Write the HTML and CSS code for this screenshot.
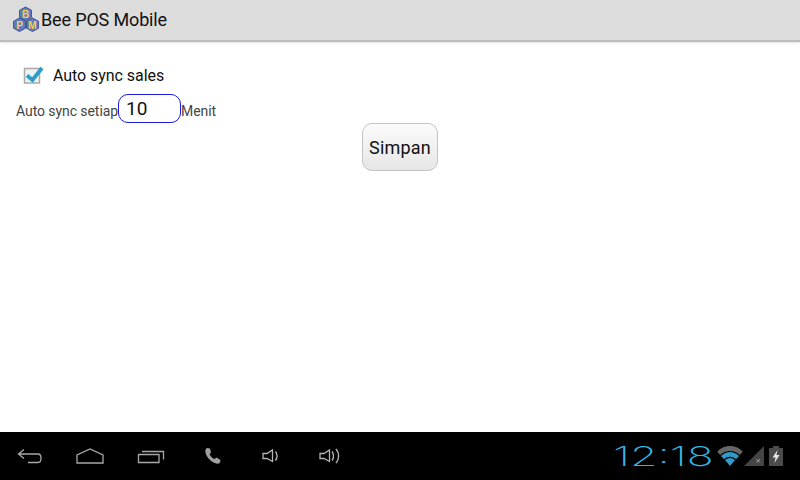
FILE: index.html
```html
<!DOCTYPE html>
<html lang="id">
<head>
<meta charset="utf-8">
<title>Bee POS Mobile</title>
<link rel="stylesheet" href="styles.css">
</head>
<body>
<div class="screen">
  <header class="action-bar">
    <svg class="logo" width="26" height="26" viewBox="0 0 26 26">
      <path d="M6 11.500 13 15 20 11.500V20H6Z" fill="#8c7a3a"/>
      <g fill="#5f7cc4" stroke="#3f5594" stroke-width="1">
        <path d="M12.500 1 18.500 4.300V11.200L12.500 14.500 6.500 11.200V4.300Z"/>
        <path d="M6.500 12 12.500 15.300V22.200L6.500 25.500 0.500 22.200V15.300Z"/>
        <path d="M19.500 12 25.500 15.300V22.200L19.500 25.500 13.500 22.200V15.300Z"/>
      </g>
      <text class="logo-letter" x="12.500" y="11.500">B</text>
      <text class="logo-letter" x="6.500" y="22.500">P</text>
      <text class="logo-letter" x="19.500" y="22.500">M</text>
    </svg>
    <span class="app-title">Bee POS Mobile</span>
  </header>

  <main class="content">
    <label class="check-row">
      <svg class="checkbox" width="22" height="20" viewBox="0 0 22 20">
        <rect x="2.500" y="3.500" width="15" height="14.500" fill="#f1f1f1" stroke="#a9a9a9" stroke-width="1.500"/>
        <path d="M5 10.500 10.500 15 20 3" fill="none" stroke="#2b9ccb" stroke-width="3.800"/>
      </svg>
      <span class="check-label">Auto sync sales</span>
    </label>
    <div class="interval-row">
      <span class="hint">Auto sync setiap</span>
      <span class="number-field">10</span>
      <span class="hint">Menit</span>
    </div>
    <div class="button-row">
      <button class="save-button" type="button">Simpan</button>
    </div>
  </main>

  <nav class="system-bar">
    <div class="nav-icons">
      <svg class="ico ico-back" width="26" height="16" viewBox="0 0 26 16">
        <path d="M7 1.500 1.500 6 7 10.500M2 6H21C25 6 25 14.500 21 14.500H11" fill="none" stroke="#a8a8a8" stroke-width="1.300"/>
      </svg>
      <svg class="ico ico-home" width="28" height="16" viewBox="0 0 28 16">
        <path d="M1 15V7L14 1 27 7V15Z" fill="none" stroke="#a8a8a8" stroke-width="1.300"/>
      </svg>
      <svg class="ico ico-recent" width="28" height="16" viewBox="0 0 28 16">
        <path d="M1.500 6.500H22V14.500H1.500ZM5 3.500H26.500V11.500" fill="none" stroke="#a8a8a8" stroke-width="1.300"/>
      </svg>
      <svg class="ico ico-phone" width="18" height="18" viewBox="0 0 18 18">
        <path d="M3 1 6 1.500 7 5.500 5.500 7C6.500 9.500 8 11 10.500 12L12.500 10.500 16.500 13 16 15.500C15 17 13 17 11 16 6 14 2.500 10 1.500 5.500 1 3.500 1.500 2 3 1Z" fill="#a0a0a0"/>
      </svg>
      <svg class="ico ico-voldown" width="18" height="16" viewBox="0 0 18 16">
        <path d="M1 5.500H5L10.500 2V13.500L5 10.500H1Z" fill="none" stroke="#b4b4b4" stroke-width="1.300"/>
        <path d="M13.500 3.500C15.500 6 15.500 10 13.500 12.500" fill="none" stroke="#b4b4b4" stroke-width="1.400"/>
      </svg>
      <svg class="ico ico-volup" width="22" height="18" viewBox="0 0 22 18">
        <path d="M1 6.500H5L10.500 3V14.500L5 11.500H1Z" fill="none" stroke="#b4b4b4" stroke-width="1.300"/>
        <path d="M13 4.500C15 7 15 11 13 13.500M17 2C20.500 6 20.500 12 17 16" fill="none" stroke="#b4b4b4" stroke-width="1.400"/>
      </svg>
    </div>
    <div class="status-icons">
      <span class="clock-box"><span class="clock">12:18</span></span>
      <svg class="wifi" width="26" height="20" viewBox="0 0 28 22">
        <path d="M0 6C8 -2 20 -2 28 6L25 10C18 4 10 4 3 10Z" fill="#666"/>
        <path d="M4 11C10.500 5 17.500 5 24 11L20.500 14.500C16 11 12 11 7.500 14.500Z" fill="#2f9bc6"/>
        <path d="M8.500 15.500C12 12.500 16 12.500 19.500 15.500L14 22Z" fill="#2f9bc6"/>
      </svg>
      <svg class="signal" width="20" height="20" viewBox="0 0 20 20">
        <path d="M20 0V20H0Z" fill="#444"/>
        <path d="M12.500 13 16 16.500M16 13 12.500 16.500" stroke="#aaa" stroke-width="1"/>
      </svg>
      <svg class="battery" width="14" height="20" viewBox="0 0 14 20">
        <path d="M4 0H10V2H14V20H0V2H4Z" fill="#4a4a4a"/>
        <path d="M8.500 4 3.500 11.500H6.500L5.500 17 10.500 9H7.500Z" fill="#e6e6e6"/>
      </svg>
    </div>
  </nav>
</div>
</body>
</html>
```
FILE: styles.css
```css
* { box-sizing: border-box; }
html, body { margin: 0; padding: 0; }
body { font-family: Roboto, "Liberation Sans", sans-serif; background: #fff; }

.screen { width: 800px; height: 480px; display: flex; flex-direction: column; overflow: hidden; }

.action-bar {
  height: 42px;
  flex: none;
  display: flex;
  align-items: center;
  padding: 0 0 2px 13px;
  gap: 2px;
  background: #dcdcdc;
  border-bottom: 2px solid #bdbdbd;
  box-shadow: 0 1px 2px rgba(0,0,0,0.12);
}
.logo { flex: none; }
.logo-letter { font: bold 10px "Liberation Sans", sans-serif; fill: #f8d040; text-anchor: middle; }
.app-title { font-size: 18px; letter-spacing: -0.15px; color: #111; }

.content { flex: 1; display: flex; flex-direction: column; }

.check-row { display: flex; align-items: center; height: 32px; margin-top: 17px; padding-left: 22px; }
.checkbox { display: block; flex: none; margin-right: 9px; }
.check-label { font-size: 16px; letter-spacing: -0.05px; color: #111; }

.interval-row { display: flex; align-items: center; height: 29px; margin-top: 3px; padding-left: 16px; }
.hint { font-size: 14px; letter-spacing: -0.07px; color: #444; position: relative; top: 2px; }
.number-field {
  width: 63px;
  height: 29px;
  padding-left: 7px;
  border: 1px solid #1a1ae0;
  border-radius: 10px;
  font-size: 19px;
  line-height: 28px;
  color: #111;
}

.button-row { display: flex; justify-content: center; }
.save-button {
  width: 76px;
  height: 48px;
  padding: 0;
  border: 1px solid #c4c4c4;
  border-radius: 10px;
  background: linear-gradient(#fbfbfb, #e6e6e6);
  font: 18px Roboto, sans-serif;
  letter-spacing: 0.2px;
  color: #111;
}

.system-bar {
  height: 48px;
  flex: none;
  display: flex;
  align-items: center;
  justify-content: space-between;
  background: #000;
}
.nav-icons { display: flex; align-items: center; padding-left: 17px; }
.ico { display: block; flex: none; }
.ico-home { margin-left: 33px; }
.ico-recent { margin-left: 33px; }
.ico-phone { margin-left: 39px; }
.ico-voldown { margin-left: 40px; }
.ico-volup { margin-left: 39px; }

.status-icons { display: flex; align-items: center; padding-right: 17px; }
.clock-box { width: 103px; flex: none; }
.clock {
  display: inline-block;
  font: 200 27px Inter, sans-serif;
  color: #33b5e5;
  white-space: nowrap;
  transform: translateX(-1px) scaleX(1.65);
  transform-origin: left center;
}
.signal { margin-left: 1px; }
.battery { margin-left: 5px; }
```
